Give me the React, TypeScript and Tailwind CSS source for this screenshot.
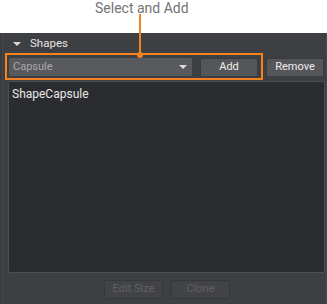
import React from 'react';

export default function App() {
    return (
        <div className="relative w-[327px] h-[304px] overflow-hidden bg-white font-['Roboto',sans-serif]">
            <div className="h-[33px]" />
            <div className="h-[271px] bg-[#3a3b3f] pl-[2px]">
                <div className="h-full border-l border-r border-[#47484c] bg-[#3e3f43] flex flex-col">
                    <div className="h-[19px] mt-[1px] flex items-center pl-[10px] gap-[9px] text-[11.5px] text-[#e6e6e6]">
                        <span className="w-0 h-0 border-l-[4px] border-r-[4px] border-t-[4px] border-l-transparent border-r-transparent border-t-[#d8d8d8]" />
                        <span>Shapes</span>
                    </div>
                    <div className="flex items-center h-[20px] mt-[4px] pl-[6px] text-[11px]">
                        <div className="w-[183px] h-[18px] rounded-[2px] bg-[#595a5e] flex items-center justify-between pl-[4px] pr-[5px] text-[#a9a9ab]">
                            <span>Capsule</span>
                            <span className="w-0 h-0 border-l-[4px] border-r-[4px] border-t-[4px] border-l-transparent border-r-transparent border-t-[#dcdcdc]" />
                        </div>
                        <button className="ml-[8px] w-[58px] h-[19px] rounded-[2px] border border-[#3a3b3e] bg-[#55565a] text-[#ededed]">Add</button>
                        <button className="ml-[8px] w-[58px] h-[19px] rounded-[2px] border border-[#3a3b3e] bg-[#55565a] text-[#ededed]">Remove</button>
                    </div>
                    <div className="mt-[4px] ml-[5px] mr-[1px] h-[192px] rounded-[2px] border border-[#4d4e52] bg-[#2b2c2f] px-[3px] pt-[3px] text-[12px] text-[#e8e8e8]">
                        ShapeCapsule
                    </div>
                    <div className="flex justify-center gap-[8px] mt-[7px] pl-[5px] text-[11px]">
                        <button className="w-[59px] h-[19px] rounded-[2px] border border-[#36373a] bg-[#424347] text-[#606165]">Edit Size</button>
                        <button className="w-[59px] h-[19px] rounded-[2px] border border-[#36373a] bg-[#424347] text-[#606165]">Clone</button>
                    </div>
                </div>
            </div>

            {/* annotation */}
            <div className="absolute left-[95px] top-[-2px] w-[92px] text-center text-[14px] text-[#737373] whitespace-nowrap">Select and Add</div>
            <div className="absolute left-[139px] top-[14px] w-[1.5px] h-[41px] bg-[#f5821f]" />
            <div className="absolute left-[5px] top-[53px] w-[258px] h-[27px] border-2 border-[#f5821f]" />
            <div className="absolute left-[137px] top-[52px] w-[6px] h-[6px] rounded-full bg-[#f5821f]" />
        </div>
    );
}
